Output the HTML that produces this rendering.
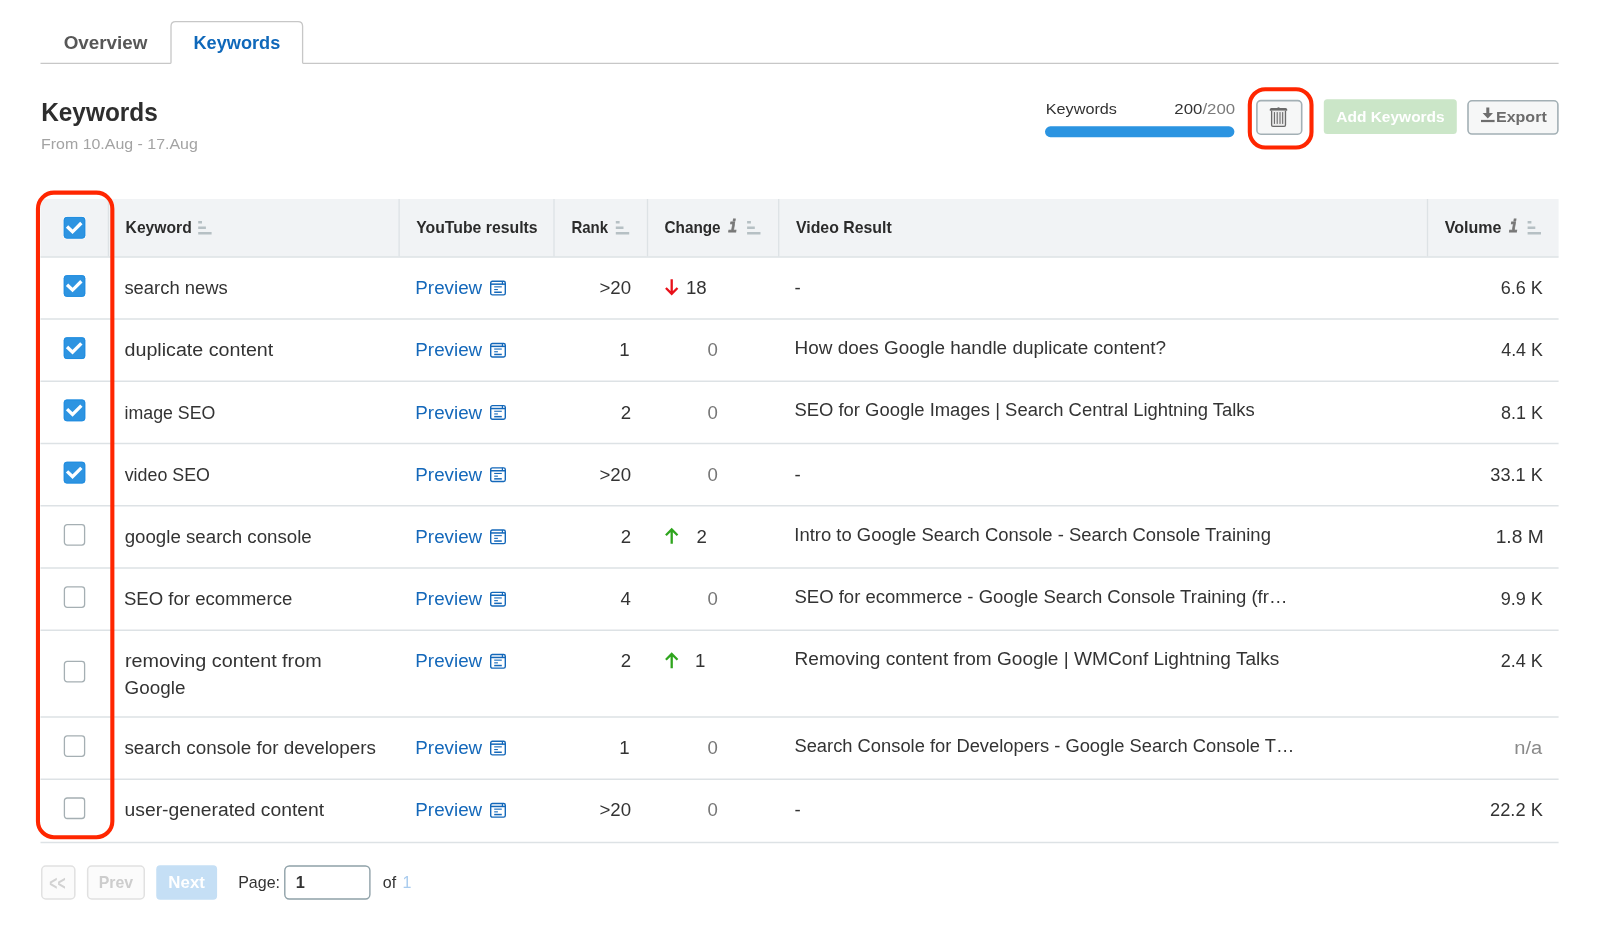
<!DOCTYPE html>
<html lang="en">
<head>
<meta charset="utf-8">
<title>Keywords</title>
<style>
*{box-sizing:border-box;margin:0;padding:0}
html,body{width:1600px;height:936px;background:#fff;overflow:hidden}
body{font-family:"Liberation Sans",sans-serif;color:#333;position:relative}
#wrap{position:absolute;left:0;top:0;width:1600px;height:936px;will-change:transform}
#gfx{position:absolute;left:0;top:0;display:block}
.t{position:absolute;white-space:nowrap;line-height:1;transform-origin:0 0}
</style>
</head>
<body>
<div id="wrap">
<svg id="gfx" width="1600" height="936" viewBox="0 0 1600 936"><path d="M40.5 63.3 H170.3 Q171 63.3 171 62.6 V26.2 Q171 21.6 175.6 21.6 H298 Q302.6 21.6 302.6 26.2 V62.6 Q302.6 63.3 303.3 63.3 H1558.6" fill="none" stroke="#c7c7c7" stroke-width="1.3"/>
<rect x="1045" y="126.3" width="189.4" height="10.9" rx="5.45" fill="#2b94e1"/>
<rect x="1256.9" y="100.6" width="44.8" height="33.6" rx="4" fill="#f6f7f7" stroke="#a3b0b5" stroke-width="1.6"/>
<g transform="translate(1269.5 106.5)"><path d="M7.3 1.9 Q9.0 -0.5 10.7 1.9 Z" fill="#6a6a6a"/><path d="M0.3 4.2 V3.1 Q0.3 1.5 1.9 1.5 H16.1 Q17.7 1.5 17.7 3.1 V4.2 Z" fill="#6a6a6a"/><path d="M2.1 4.2 V18.5 Q2.1 19.8 3.4 19.8 H14.7 Q16.0 19.8 16.0 18.5 V4.2" fill="#ebebeb" stroke="#6a6a6a" stroke-width="1.3"/><path d="M4.9 5.6 V17.4 M7.7 5.6 V17.4 M10.5 5.6 V17.4 M13.2 5.6 V17.4" stroke="#5e5e5e" stroke-width="1" fill="none"/></g>
<rect x="1249.8" y="89.2" width="61.7" height="58.3" rx="15.5" fill="none" stroke="#ff2600" stroke-width="4.1"/>
<rect x="1323.8" y="99.3" width="133.0" height="34.8" rx="3.5" fill="#cbe6c8"/>
<rect x="1468.0" y="100.8" width="89.9" height="33.2" rx="4" fill="#f6f7f7" stroke="#a3b0b5" stroke-width="1.6"/>
<g transform="translate(1481 107.5)"><path d="M5.3 0 H8.3 V5.6 H12 L6.8 10.9 L1.6 5.6 H5.3 Z" fill="#6e6e6e"/><rect x="0" y="12.4" width="13.6" height="2.2" fill="#6e6e6e"/></g>
<rect x="40.5" y="199" width="1518.1" height="57.6" fill="#f1f3f5"/>
<path d="M108.4 199 V256.5" stroke="#dde2e5" stroke-width="1.3" fill="none"/>
<path d="M399.1 199 V256.5" stroke="#dde2e5" stroke-width="1.3" fill="none"/>
<path d="M554.0 199 V256.5" stroke="#dde2e5" stroke-width="1.3" fill="none"/>
<path d="M647.5 199 V256.5" stroke="#dde2e5" stroke-width="1.3" fill="none"/>
<path d="M778.7 199 V256.5" stroke="#dde2e5" stroke-width="1.3" fill="none"/>
<path d="M1427.5 199 V256.5" stroke="#dde2e5" stroke-width="1.3" fill="none"/>
<path d="M40.5 256.9 H1558.6" stroke="#dde2e5" stroke-width="1.5" fill="none"/>
<path d="M40.5 319.1 H1558.6" stroke="#dde2e5" stroke-width="1.5" fill="none"/>
<path d="M40.5 381.3 H1558.6" stroke="#dde2e5" stroke-width="1.5" fill="none"/>
<path d="M40.5 443.5 H1558.6" stroke="#dde2e5" stroke-width="1.5" fill="none"/>
<path d="M40.5 505.7 H1558.6" stroke="#dde2e5" stroke-width="1.5" fill="none"/>
<path d="M40.5 568.0 H1558.6" stroke="#dde2e5" stroke-width="1.5" fill="none"/>
<path d="M40.5 630.2 H1558.6" stroke="#dde2e5" stroke-width="1.5" fill="none"/>
<path d="M40.5 716.9 H1558.6" stroke="#dde2e5" stroke-width="1.5" fill="none"/>
<path d="M40.5 779.2 H1558.6" stroke="#dde2e5" stroke-width="1.5" fill="none"/>
<path d="M40.5 842.6 H1558.6" stroke="#dde2e5" stroke-width="1.5" fill="none"/>
<g transform="translate(198.2 221.1)"><path d="M0 0h3.8v2.4h-3.8z M0 5.4h7.7v2.4h-7.7z M0 10.8h13.4v2.5h-13.4z" fill="#b6c0c4"/></g>
<g transform="translate(615.8 221.1)"><path d="M0 0h3.8v2.4h-3.8z M0 5.4h7.7v2.4h-7.7z M0 10.8h13.4v2.5h-13.4z" fill="#b6c0c4"/></g>
<g transform="translate(747.1 221.1)"><path d="M0 0h3.8v2.4h-3.8z M0 5.4h7.7v2.4h-7.7z M0 10.8h13.4v2.5h-13.4z" fill="#b6c0c4"/></g>
<g transform="translate(1527.6 221.1)"><path d="M0 0h3.8v2.4h-3.8z M0 5.4h7.7v2.4h-7.7z M0 10.8h13.4v2.5h-13.4z" fill="#b6c0c4"/></g>
<g transform="translate(63.75 216.9)"><rect x="-0.6" y="-0.6" width="22.7" height="22.9" rx="3.5" fill="#fff" fill-opacity="0.85"/><rect x="0" y="0" width="21.5" height="21.7" rx="3" fill="#2e94e1"/><rect x="0.5" y="0.5" width="20.5" height="20.7" rx="2.6" fill="none" stroke="#218de0" stroke-width="1"/><path d="M3.3 9.6 L8.8 14.9 L17.6 6.1" fill="none" stroke="#fff" stroke-width="3.3"/></g>
<g transform="translate(63.75 275.15)"><rect x="-0.6" y="-0.6" width="22.7" height="22.9" rx="3.5" fill="#fff" fill-opacity="0.85"/><rect x="0" y="0" width="21.5" height="21.7" rx="3" fill="#2e94e1"/><rect x="0.5" y="0.5" width="20.5" height="20.7" rx="2.6" fill="none" stroke="#218de0" stroke-width="1"/><path d="M3.3 9.6 L8.8 14.9 L17.6 6.1" fill="none" stroke="#fff" stroke-width="3.3"/></g>
<g transform="translate(490 280.55)"><g fill="none" stroke="#1468ba"><rect x="0.7" y="0.7" width="14.6" height="13.6" rx="1.7" stroke-width="1.4"/><path d="M0.7 3.6 H15.3" stroke-width="1.5"/><path d="M12.4 0.7 V3.6" stroke-width="1.2"/><path d="M4.2 6.3 H11.8" stroke-width="1.1"/><path d="M4.2 9 H7.9" stroke-width="1.1"/><path d="M4.2 11.7 H11.8" stroke-width="1.5"/></g></g>
<g transform="translate(63.75 337.34999999999997)"><rect x="-0.6" y="-0.6" width="22.7" height="22.9" rx="3.5" fill="#fff" fill-opacity="0.85"/><rect x="0" y="0" width="21.5" height="21.7" rx="3" fill="#2e94e1"/><rect x="0.5" y="0.5" width="20.5" height="20.7" rx="2.6" fill="none" stroke="#218de0" stroke-width="1"/><path d="M3.3 9.6 L8.8 14.9 L17.6 6.1" fill="none" stroke="#fff" stroke-width="3.3"/></g>
<g transform="translate(490 342.75)"><g fill="none" stroke="#1468ba"><rect x="0.7" y="0.7" width="14.6" height="13.6" rx="1.7" stroke-width="1.4"/><path d="M0.7 3.6 H15.3" stroke-width="1.5"/><path d="M12.4 0.7 V3.6" stroke-width="1.2"/><path d="M4.2 6.3 H11.8" stroke-width="1.1"/><path d="M4.2 9 H7.9" stroke-width="1.1"/><path d="M4.2 11.7 H11.8" stroke-width="1.5"/></g></g>
<g transform="translate(63.75 399.54999999999995)"><rect x="-0.6" y="-0.6" width="22.7" height="22.9" rx="3.5" fill="#fff" fill-opacity="0.85"/><rect x="0" y="0" width="21.5" height="21.7" rx="3" fill="#2e94e1"/><rect x="0.5" y="0.5" width="20.5" height="20.7" rx="2.6" fill="none" stroke="#218de0" stroke-width="1"/><path d="M3.3 9.6 L8.8 14.9 L17.6 6.1" fill="none" stroke="#fff" stroke-width="3.3"/></g>
<g transform="translate(490 404.95)"><g fill="none" stroke="#1468ba"><rect x="0.7" y="0.7" width="14.6" height="13.6" rx="1.7" stroke-width="1.4"/><path d="M0.7 3.6 H15.3" stroke-width="1.5"/><path d="M12.4 0.7 V3.6" stroke-width="1.2"/><path d="M4.2 6.3 H11.8" stroke-width="1.1"/><path d="M4.2 9 H7.9" stroke-width="1.1"/><path d="M4.2 11.7 H11.8" stroke-width="1.5"/></g></g>
<g transform="translate(63.75 461.75)"><rect x="-0.6" y="-0.6" width="22.7" height="22.9" rx="3.5" fill="#fff" fill-opacity="0.85"/><rect x="0" y="0" width="21.5" height="21.7" rx="3" fill="#2e94e1"/><rect x="0.5" y="0.5" width="20.5" height="20.7" rx="2.6" fill="none" stroke="#218de0" stroke-width="1"/><path d="M3.3 9.6 L8.8 14.9 L17.6 6.1" fill="none" stroke="#fff" stroke-width="3.3"/></g>
<g transform="translate(490 467.15)"><g fill="none" stroke="#1468ba"><rect x="0.7" y="0.7" width="14.6" height="13.6" rx="1.7" stroke-width="1.4"/><path d="M0.7 3.6 H15.3" stroke-width="1.5"/><path d="M12.4 0.7 V3.6" stroke-width="1.2"/><path d="M4.2 6.3 H11.8" stroke-width="1.1"/><path d="M4.2 9 H7.9" stroke-width="1.1"/><path d="M4.2 11.7 H11.8" stroke-width="1.5"/></g></g>
<g transform="translate(63.75 524.0)"><rect x="0.65" y="0.65" width="20.2" height="20.5" rx="2.8" fill="#fff" stroke="#a5afb3" stroke-width="1.3"/></g>
<g transform="translate(490 529.35)"><g fill="none" stroke="#1468ba"><rect x="0.7" y="0.7" width="14.6" height="13.6" rx="1.7" stroke-width="1.4"/><path d="M0.7 3.6 H15.3" stroke-width="1.5"/><path d="M12.4 0.7 V3.6" stroke-width="1.2"/><path d="M4.2 6.3 H11.8" stroke-width="1.1"/><path d="M4.2 9 H7.9" stroke-width="1.1"/><path d="M4.2 11.7 H11.8" stroke-width="1.5"/></g></g>
<g transform="translate(63.75 586.25)"><rect x="0.65" y="0.65" width="20.2" height="20.5" rx="2.8" fill="#fff" stroke="#a5afb3" stroke-width="1.3"/></g>
<g transform="translate(490 591.65)"><g fill="none" stroke="#1468ba"><rect x="0.7" y="0.7" width="14.6" height="13.6" rx="1.7" stroke-width="1.4"/><path d="M0.7 3.6 H15.3" stroke-width="1.5"/><path d="M12.4 0.7 V3.6" stroke-width="1.2"/><path d="M4.2 6.3 H11.8" stroke-width="1.1"/><path d="M4.2 9 H7.9" stroke-width="1.1"/><path d="M4.2 11.7 H11.8" stroke-width="1.5"/></g></g>
<g transform="translate(63.75 660.6999999999999)"><rect x="0.65" y="0.65" width="20.2" height="20.5" rx="2.8" fill="#fff" stroke="#a5afb3" stroke-width="1.3"/></g>
<g transform="translate(490 653.85)"><g fill="none" stroke="#1468ba"><rect x="0.7" y="0.7" width="14.6" height="13.6" rx="1.7" stroke-width="1.4"/><path d="M0.7 3.6 H15.3" stroke-width="1.5"/><path d="M12.4 0.7 V3.6" stroke-width="1.2"/><path d="M4.2 6.3 H11.8" stroke-width="1.1"/><path d="M4.2 9 H7.9" stroke-width="1.1"/><path d="M4.2 11.7 H11.8" stroke-width="1.5"/></g></g>
<g transform="translate(63.75 735.1999999999999)"><rect x="0.65" y="0.65" width="20.2" height="20.5" rx="2.8" fill="#fff" stroke="#a5afb3" stroke-width="1.3"/></g>
<g transform="translate(490 740.55)"><g fill="none" stroke="#1468ba"><rect x="0.7" y="0.7" width="14.6" height="13.6" rx="1.7" stroke-width="1.4"/><path d="M0.7 3.6 H15.3" stroke-width="1.5"/><path d="M12.4 0.7 V3.6" stroke-width="1.2"/><path d="M4.2 6.3 H11.8" stroke-width="1.1"/><path d="M4.2 9 H7.9" stroke-width="1.1"/><path d="M4.2 11.7 H11.8" stroke-width="1.5"/></g></g>
<g transform="translate(63.75 797.35)"><rect x="0.65" y="0.65" width="20.2" height="20.5" rx="2.8" fill="#fff" stroke="#a5afb3" stroke-width="1.3"/></g>
<g transform="translate(490 802.85)"><g fill="none" stroke="#1468ba"><rect x="0.7" y="0.7" width="14.6" height="13.6" rx="1.7" stroke-width="1.4"/><path d="M0.7 3.6 H15.3" stroke-width="1.5"/><path d="M12.4 0.7 V3.6" stroke-width="1.2"/><path d="M4.2 6.3 H11.8" stroke-width="1.1"/><path d="M4.2 9 H7.9" stroke-width="1.1"/><path d="M4.2 11.7 H11.8" stroke-width="1.5"/></g></g>
<g transform="translate(665 279.25)"><path d="M6.7 0.1 V14.8 M0.9 8.7 L6.7 14.5 L12.5 8.7" fill="none" stroke="#e8111a" stroke-width="2.3"/></g>
<g transform="translate(665 527.95)"><path d="M6.7 15.9 V1.2 M0.9 7.3 L6.7 1.5 L12.5 7.3" fill="none" stroke="#2fa51e" stroke-width="2.3"/></g>
<g transform="translate(665 652.45)"><path d="M6.7 15.9 V1.2 M0.9 7.3 L6.7 1.5 L12.5 7.3" fill="none" stroke="#2fa51e" stroke-width="2.3"/></g>
<rect x="37.95" y="192.65" width="74.4" height="644.6" rx="16" fill="none" stroke="#ff2600" stroke-width="4.1"/>
<rect x="41.75" y="866.0" width="33.1" height="33.0" rx="4" fill="#fbfbfb" stroke="#e1e1e1" stroke-width="1.5"/>
<rect x="87.65" y="866.0" width="56.6" height="33.0" rx="4" fill="#fbfbfb" stroke="#e1e1e1" stroke-width="1.5"/>
<rect x="156.25" y="865.25" width="60.85" height="34.5" rx="4" fill="#c5dff5"/>
<rect x="284.8" y="865.95" width="85.1" height="33.1" rx="4.5" fill="#fff" stroke="#8fa1a8" stroke-width="1.4"/></svg>
<div class="t" id="tab1" style="left:63px;top:34px;font-size:18.3px;transform:translateX(0.63px) scaleX(1.0298);font-weight:bold;color:#575757">Overview</div>
<div class="t" id="tab2" style="left:193px;top:34px;font-size:18.3px;transform:translateX(0.46px) scaleX(0.9935);font-weight:bold;color:#0f68ba">Keywords</div>
<div class="t" id="title" style="left:41px;top:100px;font-size:25.1px;transform:translateX(0.15px) scaleX(0.9727);font-weight:bold;color:#2e2e2e">Keywords</div>
<div class="t" id="sub" style="left:41px;top:136px;font-size:15.4px;transform:translateX(0.01px) scaleX(1.0358);color:#a3a3a3">From 10.Aug - 17.Aug</div>
<div class="t" id="kwlbl" style="left:1045px;top:101px;font-size:15.0px;transform:translateX(0.75px) scaleX(1.0813);color:#333">Keywords</div>
<div class="t" id="kwn" style="left:1174px;top:101px;font-size:15.0px;transform:translateX(0.36px) scaleX(1.1204);color:#333">200<span style="color:#7a7a7a">/200</span></div>
<div class="t" id="addkw" style="left:1336px;top:109px;font-size:15.1px;transform:translateX(0.29px) scaleX(1.0258);font-weight:bold;color:#ffffff">Add Keywords</div>
<div class="t" id="export" style="left:1495px;top:109px;font-size:15.1px;transform:translateX(0.94px) scaleX(1.0624);font-weight:bold;color:#6c6c6c">Export</div>
<div class="t" id="h_kw" style="left:125px;top:220px;font-size:15.7px;transform:translateX(0.60px) scaleX(0.9977);font-weight:bold;color:#2b2b2b">Keyword</div>
<div class="t" id="h_yt" style="left:416px;top:220px;font-size:15.7px;transform:translateX(0.20px) scaleX(1.0067);font-weight:bold;color:#2b2b2b">YouTube results</div>
<div class="t" id="h_rank" style="left:571px;top:220px;font-size:15.7px;transform:translateX(0.44px) scaleX(0.9557);font-weight:bold;color:#2b2b2b">Rank</div>
<div class="t" id="h_chg" style="left:664px;top:220px;font-size:15.7px;transform:translateX(0.47px) scaleX(0.9760);font-weight:bold;color:#2b2b2b">Change</div>
<div class="t" id="h_vid" style="left:795px;top:220px;font-size:15.7px;transform:translateX(0.95px) scaleX(1.0111);font-weight:bold;color:#2b2b2b">Video Result</div>
<div class="t" id="h_vol" style="left:1444px;top:220px;font-size:15.7px;transform:translateX(0.84px) scaleX(1.0210);font-weight:bold;color:#2b2b2b">Volume</div>
<div class="t" id="info1" style="left:728px;top:219px;font-size:18.4px;transform:translateX(0.50px) scaleX(0.7805);font-weight:bold;font-family:'Liberation Mono',monospace;font-style:italic;-webkit-text-stroke:0.9px #787878;color:#787878">i</div>
<div class="t" id="info2" style="left:1509px;top:219px;font-size:18.4px;transform:translateX(0.30px) scaleX(0.7805);font-weight:bold;font-family:'Liberation Mono',monospace;font-style:italic;-webkit-text-stroke:0.9px #787878;color:#787878">i</div>
<div class="t" id="kw0" style="left:124px;top:278px;font-size:19.2px;transform:translateX(0.42px) scaleX(0.9587);color:#333">search news</div>
<div class="t" id="pv0" style="left:415px;top:278px;font-size:19.2px;transform:translateX(0.33px) scaleX(0.9798);color:#1468ba">Preview</div>
<div class="t" id="rk0" style="left:599px;top:278px;font-size:19.2px;transform:translateX(0.43px) scaleX(0.9721);color:#333">&gt;20</div>
<div class="t" id="cg0" style="left:685px;top:278px;font-size:19.2px;transform:translateX(0.97px) scaleX(0.9721);color:#333">18</div>
<div class="t" id="vd0" style="left:794px;top:278px;font-size:19.2px;transform:translateX(0.61px) scaleX(0.9721);color:#333">-</div>
<div class="t" id="vl0" style="left:1500px;top:278px;font-size:19.2px;transform:translateX(0.76px) scaleX(0.9402);color:#333">6.6 K</div>
<div class="t" id="kw1" style="left:124px;top:340px;font-size:19.2px;transform:translateX(0.53px) scaleX(1.0253);color:#333">duplicate content</div>
<div class="t" id="pv1" style="left:415px;top:340px;font-size:19.2px;transform:translateX(0.33px) scaleX(0.9798);color:#1468ba">Preview</div>
<div class="t" id="rk1" style="left:619px;top:340px;font-size:19.2px;transform:translateX(0.32px) scaleX(0.9721);color:#333">1</div>
<div class="t" id="cg1" style="left:707px;top:340px;font-size:19.2px;transform:translateX(0.47px) scaleX(0.9721);color:#777">0</div>
<div class="t" id="vd1" style="left:794px;top:338px;font-size:19.2px;transform:translateX(0.52px) scaleX(0.9868);color:#333">How does Google handle duplicate content?</div>
<div class="t" id="vl1" style="left:1501px;top:340px;font-size:19.2px;transform:translateX(0.24px) scaleX(0.9295);color:#333">4.4 K</div>
<div class="t" id="kw2" style="left:124px;top:403px;font-size:19.2px;transform:translateX(0.54px) scaleX(0.9250);color:#333">image SEO</div>
<div class="t" id="pv2" style="left:415px;top:403px;font-size:19.2px;transform:translateX(0.33px) scaleX(0.9798);color:#1468ba">Preview</div>
<div class="t" id="rk2" style="left:620px;top:403px;font-size:19.2px;transform:translateX(0.82px) scaleX(0.9721);color:#333">2</div>
<div class="t" id="cg2" style="left:707px;top:403px;font-size:19.2px;transform:translateX(0.47px) scaleX(0.9721);color:#777">0</div>
<div class="t" id="vd2" style="left:794px;top:400px;font-size:19.2px;transform:translateX(0.44px) scaleX(0.9604);color:#333">SEO for Google Images | Search Central Lightning Talks</div>
<div class="t" id="vl2" style="left:1500px;top:403px;font-size:19.2px;transform:translateX(1.00px) scaleX(0.9349);color:#333">8.1 K</div>
<div class="t" id="kw3" style="left:124px;top:465px;font-size:19.2px;transform:translateX(0.67px) scaleX(0.9293);color:#333">video SEO</div>
<div class="t" id="pv3" style="left:415px;top:465px;font-size:19.2px;transform:translateX(0.33px) scaleX(0.9798);color:#1468ba">Preview</div>
<div class="t" id="rk3" style="left:599px;top:465px;font-size:19.2px;transform:translateX(0.43px) scaleX(0.9721);color:#333">&gt;20</div>
<div class="t" id="cg3" style="left:707px;top:465px;font-size:19.2px;transform:translateX(0.47px) scaleX(0.9721);color:#777">0</div>
<div class="t" id="vd3" style="left:794px;top:465px;font-size:19.2px;transform:translateX(0.61px) scaleX(0.9721);color:#333">-</div>
<div class="t" id="vl3" style="left:1490px;top:465px;font-size:19.2px;transform:translateX(0.29px) scaleX(0.9468);color:#333">33.1 K</div>
<div class="t" id="kw4" style="left:124px;top:527px;font-size:19.2px;transform:translateX(0.67px) scaleX(0.9743);color:#333">google search console</div>
<div class="t" id="pv4" style="left:415px;top:527px;font-size:19.2px;transform:translateX(0.33px) scaleX(0.9798);color:#1468ba">Preview</div>
<div class="t" id="rk4" style="left:620px;top:527px;font-size:19.2px;transform:translateX(0.82px) scaleX(0.9721);color:#333">2</div>
<div class="t" id="cg4" style="left:696px;top:527px;font-size:19.2px;transform:translateX(0.42px) scaleX(0.9721);color:#333">2</div>
<div class="t" id="vd4" style="left:794px;top:525px;font-size:19.2px;transform:translateX(0.32px) scaleX(0.9609);color:#333">Intro to Google Search Console - Search Console Training</div>
<div class="t" id="vl4" style="left:1495px;top:527px;font-size:19.2px;transform:translateX(0.70px) scaleX(1.0000);color:#333">1.8 M</div>
<div class="t" id="kw5" style="left:123px;top:589px;font-size:19.2px;transform:translateX(0.93px) scaleX(0.9686);color:#333">SEO for ecommerce</div>
<div class="t" id="pv5" style="left:415px;top:589px;font-size:19.2px;transform:translateX(0.33px) scaleX(0.9798);color:#1468ba">Preview</div>
<div class="t" id="rk5" style="left:620px;top:589px;font-size:19.2px;transform:translateX(0.58px) scaleX(0.9721);color:#333">4</div>
<div class="t" id="cg5" style="left:707px;top:589px;font-size:19.2px;transform:translateX(0.47px) scaleX(0.9721);color:#777">0</div>
<div class="t" id="vd5" style="left:794px;top:587px;font-size:19.2px;transform:translateX(0.43px) scaleX(0.9652);color:#333">SEO for ecommerce - Google Search Console Training (fr…</div>
<div class="t" id="vl5" style="left:1500px;top:589px;font-size:19.2px;transform:translateX(0.76px) scaleX(0.9402);color:#333">9.9 K</div>
<div class="t" id="kw6" style="left:124px;top:651px;font-size:19.2px;transform:translateX(0.91px) scaleX(1.0308);color:#333">removing content from</div>
<div class="t" id="kw6b" style="left:124px;top:678px;font-size:19.2px;transform:translateX(0.62px) scaleX(0.9817);color:#333">Google</div>
<div class="t" id="pv6" style="left:415px;top:651px;font-size:19.2px;transform:translateX(0.33px) scaleX(0.9798);color:#1468ba">Preview</div>
<div class="t" id="rk6" style="left:620px;top:651px;font-size:19.2px;transform:translateX(0.82px) scaleX(0.9721);color:#333">2</div>
<div class="t" id="cg6" style="left:695px;top:651px;font-size:19.2px;transform:translateX(0.12px) scaleX(0.9721);color:#333">1</div>
<div class="t" id="vd6" style="left:794px;top:649px;font-size:19.2px;transform:translateX(0.51px) scaleX(0.9940);color:#333">Removing content from Google | WMConf Lightning Talks</div>
<div class="t" id="vl6" style="left:1500px;top:651px;font-size:19.2px;transform:translateX(0.76px) scaleX(0.9402);color:#333">2.4 K</div>
<div class="t" id="kw7" style="left:124px;top:738px;font-size:19.2px;transform:translateX(0.41px) scaleX(0.9829);color:#333">search console for developers</div>
<div class="t" id="pv7" style="left:415px;top:738px;font-size:19.2px;transform:translateX(0.33px) scaleX(0.9798);color:#1468ba">Preview</div>
<div class="t" id="rk7" style="left:619px;top:738px;font-size:19.2px;transform:translateX(0.32px) scaleX(0.9721);color:#333">1</div>
<div class="t" id="cg7" style="left:707px;top:738px;font-size:19.2px;transform:translateX(0.47px) scaleX(0.9721);color:#777">0</div>
<div class="t" id="vd7" style="left:794px;top:736px;font-size:19.2px;transform:translateX(0.44px) scaleX(0.9551);color:#333">Search Console for Developers - Google Search Console T…</div>
<div class="t" id="vl7" style="left:1514px;top:738px;font-size:19.2px;transform:translateX(0.29px) scaleX(1.0471);color:#8a8a8a">n/a</div>
<div class="t" id="kw8" style="left:124px;top:800px;font-size:19.2px;transform:translateX(0.54px) scaleX(1.0061);color:#333">user-generated content</div>
<div class="t" id="pv8" style="left:415px;top:800px;font-size:19.2px;transform:translateX(0.33px) scaleX(0.9798);color:#1468ba">Preview</div>
<div class="t" id="rk8" style="left:599px;top:800px;font-size:19.2px;transform:translateX(0.43px) scaleX(0.9721);color:#333">&gt;20</div>
<div class="t" id="cg8" style="left:707px;top:800px;font-size:19.2px;transform:translateX(0.47px) scaleX(0.9721);color:#777">0</div>
<div class="t" id="vd8" style="left:794px;top:800px;font-size:19.2px;transform:translateX(0.61px) scaleX(0.9721);color:#333">-</div>
<div class="t" id="vl8" style="left:1490px;top:800px;font-size:19.2px;transform:translateX(0.05px) scaleX(0.9512);color:#333">22.2 K</div>
<div class="t" id="pg_first" style="left:49px;top:872px;font-size:21px;transform:translateX(0.34px) scaleX(0.6593);font-weight:bold;color:#d2d2d2">&lt;&lt;</div>
<div class="t" id="pg_prev" style="left:98px;top:874px;font-size:16.4px;transform:translateX(0.78px) scaleX(0.9667);font-weight:bold;color:#cdcdcd">Prev</div>
<div class="t" id="pg_next" style="left:168px;top:874px;font-size:16.4px;transform:translateX(0.37px) scaleX(1.0277);font-weight:bold;color:#ffffff">Next</div>
<div class="t" id="pg_page" style="left:238px;top:874px;font-size:16.4px;transform:translateX(0.18px) scaleX(0.9775);color:#333">Page:</div>
<div class="t" id="pg_one" style="left:295px;top:874px;font-size:16.4px;transform:translateX(0.79px) scaleX(0.9972);font-weight:bold;color:#333">1</div>
<div class="t" id="pg_of" style="left:382px;top:874px;font-size:16.4px;transform:translateX(0.81px) scaleX(0.9775);color:#333">of</div>
<div class="t" id="pg_tot" style="left:402px;top:874px;font-size:16.4px;transform:translateX(0.56px) scaleX(0.9775);color:#a8cbee">1</div>
</div>
</body>
</html>
